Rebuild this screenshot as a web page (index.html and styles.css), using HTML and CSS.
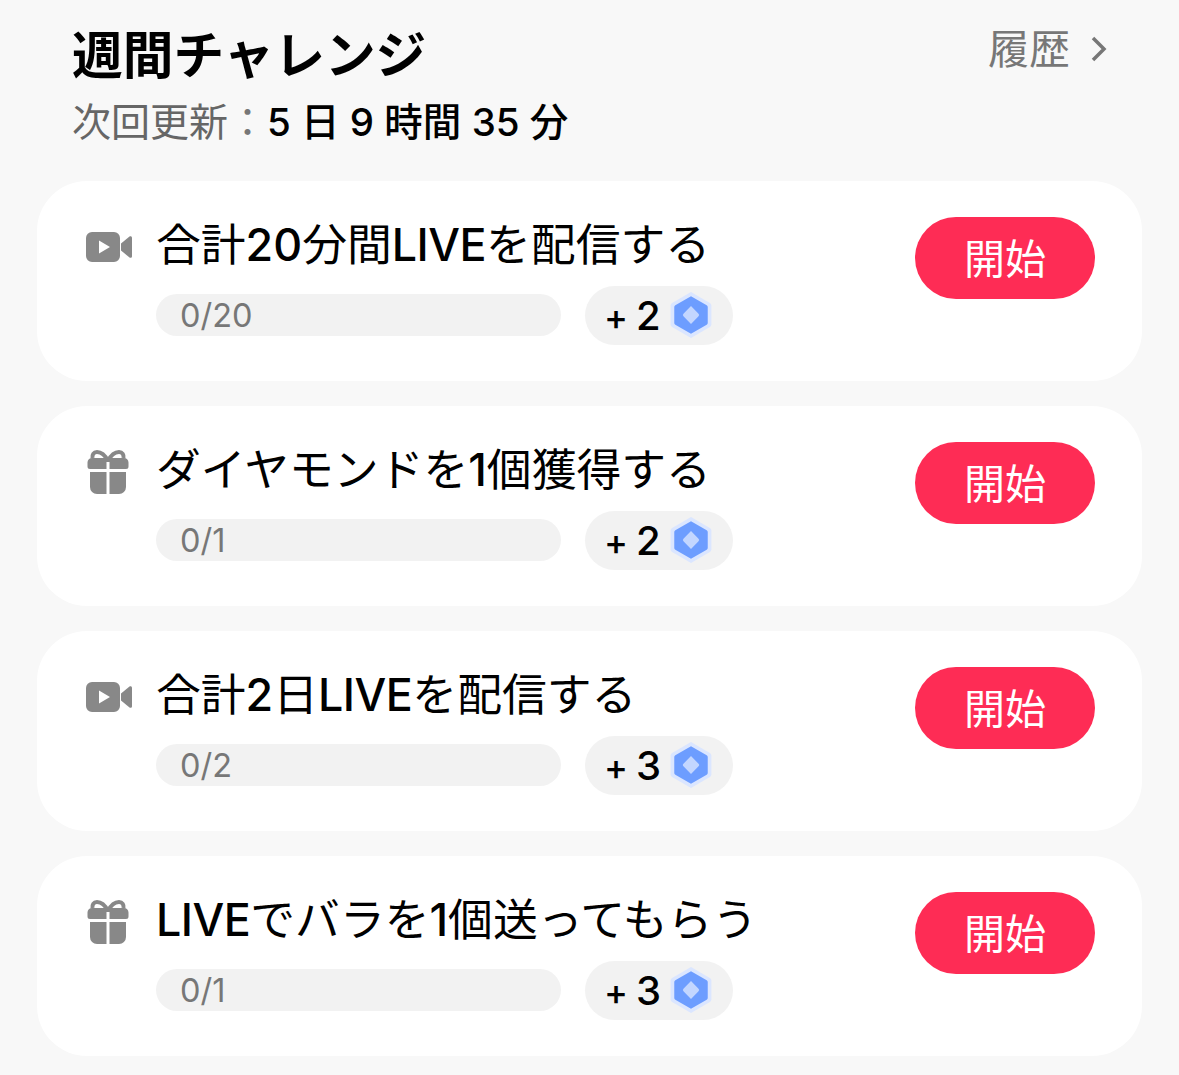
FILE: index.html
```html
<!DOCTYPE html>
<html lang="ja">
<head>
    <meta charset="UTF-8">
    <meta name="viewport" content="width=device-width, initial-scale=1.0">
    <title>週間チャレンジ</title>
    <link rel="stylesheet" href="styles.css">
</head>
<body>
    <svg class="defs" width="0" height="0">
        <symbol id="icon-video" viewBox="0 0 46 30">
            <path fill="#888" fill-rule="evenodd" d="M6 0h22a6 6 0 0 1 6 6v18a6 6 0 0 1-6 6H6a6 6 0 0 1-6-6V6a6 6 0 0 1 6-6zM13 8.500v13l11-6.500z"/>
            <path fill="#888" d="M35 11.500l8.500-7c1-.8 2.500-.2 2.500 1.200v18.600c0 1.400-1.500 2-2.500 1.200L35 18.500z"/>
        </symbol>
        <symbol id="icon-gift" viewBox="0 0 42 44">
            <path fill="none" stroke="#888" stroke-width="4" d="M21 11C17 3 13 2 10 2 6.500 2 5 5 5.500 8M21 11C25 3 29 2 32 2 35.500 2 37 5 36.500 8"/>
            <path fill="#888" d="M5 8h14.500v11H3a2.500 2.500 0 0 1-2.500-2.500V12.500A4.500 4.500 0 0 1 5 8zM22.500 8H37a4.500 4.500 0 0 1 4.500 4.500v4A2.500 2.500 0 0 1 39 19H22.500zM3 22h16.500v22H10a7 7 0 0 1-7-7zM22.500 22H39v15a7 7 0 0 1-7 7h-9.500z"/>
        </symbol>
        <symbol id="icon-gem" viewBox="0 0 40 44">
            <path fill="#dbe6ff" d="M20 0l18 10.500a3 3 0 0 1 1.500 2.500v18a3 3 0 0 1-1.500 2.500L20 44 2 33.500A3 3 0 0 1 .5 31V13A3 3 0 0 1 2 10.500z"/>
            <path fill="#6d9dff" d="M20 4l15 8.700a2 2 0 0 1 1 1.700v15.200a2 2 0 0 1-1 1.700L20 40 5 31.300a2 2 0 0 1-1-1.700V14.400a2 2 0 0 1 1-1.700z"/>
            <path fill="#c3d6ff" d="M20 13.500l7 7a2 2 0 0 1 0 3l-7 7-7-7a2 2 0 0 1 0-3z"/>
        </symbol>
    </svg>

    <header class="page-head">
        <div>
            <h1>週間チャレンジ</h1>
            <p class="next-update">次回更新<i>：</i><span>5 日 9 時間 35 分</span></p>
        </div>
        <a class="history" href="#">履歴
            <svg width="18" height="28" viewBox="0 0 18 28"><path d="M3 3l11 11L3 25" fill="none" stroke="#777" stroke-width="3.500"/></svg>
        </a>
    </header>

    <main class="tasks">
        <section class="task">
            <svg class="task-icon"><use href="#icon-video"/></svg>
            <div class="task-body">
                <h2>合計<b>20</b>分間<b class="live">LIVE</b>を配信する</h2>
                <div class="task-meta">
                    <div class="progress">0/20</div>
                    <div class="reward"><span class="plus">+</span><b>2</b><svg class="gem"><use href="#icon-gem"/></svg></div>
                </div>
            </div>
            <button class="start">開始</button>
        </section>
        <section class="task">
            <svg class="task-icon gift"><use href="#icon-gift"/></svg>
            <div class="task-body">
                <h2>ダイヤモンドを<b>1</b>個獲得する</h2>
                <div class="task-meta">
                    <div class="progress">0/1</div>
                    <div class="reward"><span class="plus">+</span><b>2</b><svg class="gem"><use href="#icon-gem"/></svg></div>
                </div>
            </div>
            <button class="start">開始</button>
        </section>
        <section class="task">
            <svg class="task-icon"><use href="#icon-video"/></svg>
            <div class="task-body">
                <h2>合計<b>2</b>日<b class="live">LIVE</b>を配信する</h2>
                <div class="task-meta">
                    <div class="progress">0/2</div>
                    <div class="reward"><span class="plus">+</span><b>3</b><svg class="gem"><use href="#icon-gem"/></svg></div>
                </div>
            </div>
            <button class="start">開始</button>
        </section>
        <section class="task">
            <svg class="task-icon gift"><use href="#icon-gift"/></svg>
            <div class="task-body">
                <h2><b class="live">LIVE</b>でバラを<b>1</b>個送ってもらう</h2>
                <div class="task-meta">
                    <div class="progress">0/1</div>
                    <div class="reward"><span class="plus">+</span><b>3</b><svg class="gem"><use href="#icon-gem"/></svg></div>
                </div>
            </div>
            <button class="start">開始</button>
        </section>
    </main>
</body>
</html>
```

FILE: styles.css
```css
body {
    font-family: Inter, "Noto Sans CJK JP", sans-serif;
    margin: 0;
    padding: 0;
    background-color: #f8f8f8;
    color: #000;
}
.defs {
    position: absolute;
}
.page-head {
    display: flex;
    justify-content: space-between;
    align-items: flex-start;
    height: 181px;
    padding: 0 71px 0 72px;
    box-sizing: border-box;
}
h1 {
    margin: 21px 0 0;
    font-size: 50.700px;
    line-height: 70px;
    font-weight: 700;
}
.next-update {
    margin: 3px 0 0;
    font-size: 39px;
    line-height: 56px;
    color: #666;
}
.next-update i {
    font-style: normal;
    color: #777;
}
.next-update span {
    color: #000;
    font-size: 38.500px;
    font-weight: 500;
}
.history {
    display: flex;
    align-items: center;
    gap: 20px;
    margin-top: 20px;
    font-size: 41px;
    line-height: 58px;
    color: #777;
    text-decoration: none;
}
.tasks {
    display: flex;
    flex-direction: column;
    gap: 25px;
    margin: 0 37px;
}
.task {
    display: flex;
    align-items: flex-start;
    height: 200px;
    padding: 36px 47px 0 49px;
    box-sizing: border-box;
    background: white;
    border-radius: 50px;
}
.task-icon {
    flex: none;
    width: 46px;
    height: 30px;
    margin: 15px 24px 0 0;
}
.task-icon.gift {
    width: 42px;
    height: 44px;
    margin: 8px 27px 0 1px;
}
.task-body {
    flex: 1;
}
h2 {
    margin: -1px 0 0;
    font-size: 44.800px;
    line-height: 58px;
    font-weight: 400;
}
h2 b {
    font-weight: 500;
}
h2 .live {
    letter-spacing: -0.500px;
}
.task-meta {
    display: flex;
    align-items: center;
    gap: 24px;
    margin-top: 11px;
}
.progress {
    width: 405px;
    height: 42px;
    padding-left: 24px;
    box-sizing: border-box;
    background: #f2f2f2;
    border-radius: 21px;
    font-size: 32.500px;
    line-height: 44px;
    color: #777;
}
.reward {
    display: flex;
    align-items: center;
    width: 148px;
    height: 59px;
    margin-top: 1px;
    padding-left: 19px;
    box-sizing: border-box;
    background: #f2f2f2;
    border-radius: 30px;
    font-weight: 500;
}
.plus {
    margin-top: 3px;
    font-size: 36px;
}
.reward b {
    margin-left: 8px;
    font-size: 40px;
    font-weight: 500;
}
.gem {
    width: 42px;
    height: 46px;
    margin-left: 9px;
    margin-bottom: 2px;
}
.start {
    flex: none;
    width: 180px;
    height: 82px;
    padding-bottom: 6px;
    border: none;
    border-radius: 41px;
    background-color: #fe2c55;
    color: white;
    font-family: inherit;
    font-size: 41px;
    cursor: pointer;
}
```
